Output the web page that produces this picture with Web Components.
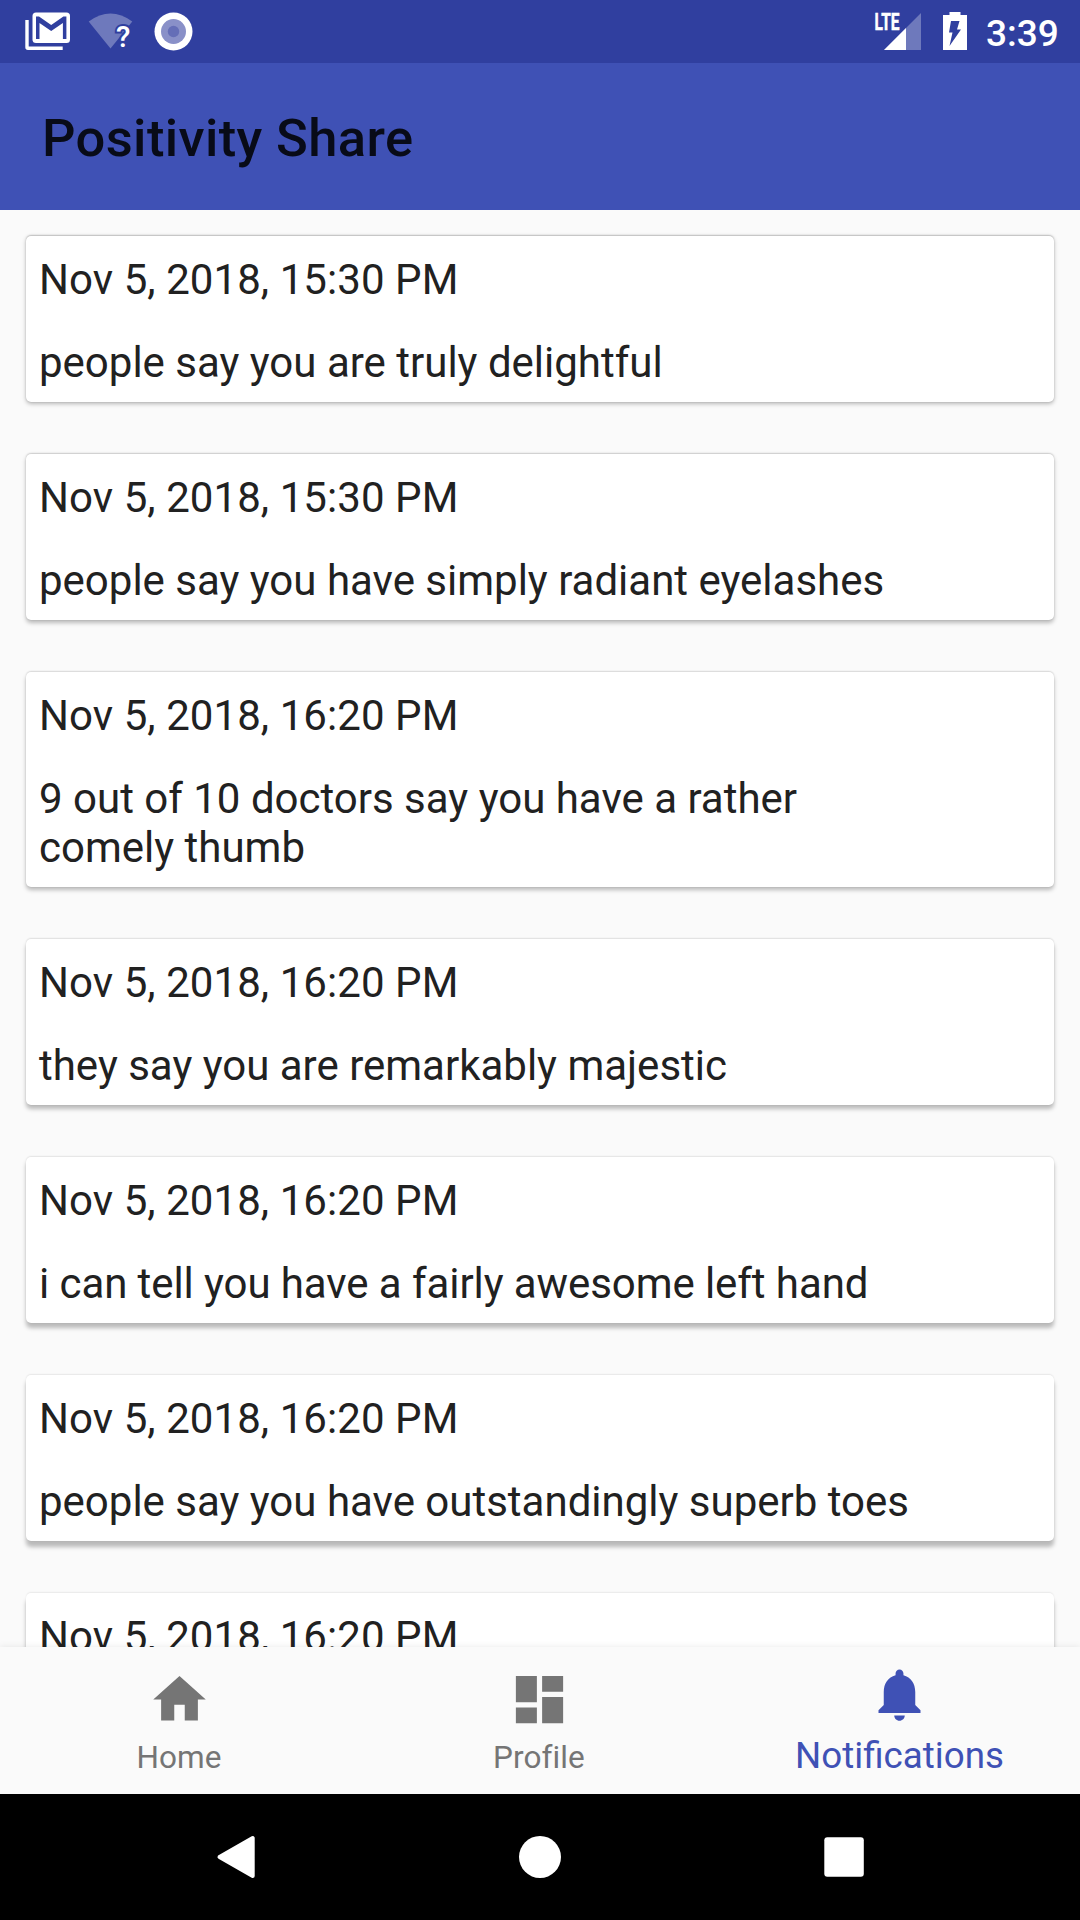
<!DOCTYPE html>
<html lang="en">
<head>
<meta charset="utf-8">
<title>Positivity Share</title>
<style>
html, body { margin: 0; padding: 0; }
body { font-family: Roboto, "Noto Sans", sans-serif; background: #fafafa; }
</style>
</head>
<body>
<positivity-app>
  <status-bar slot="status"></status-bar>
  <app-bar slot="header">Positivity Share</app-bar>
  <share-card style="--dy:1.6px;--amb:.19"><span slot="date">Nov 5, 2018, 15:30 PM</span>people say you are truly delightful</share-card>
  <share-card style="--dy:2.2px;--amb:.16"><span slot="date">Nov 5, 2018, 15:30 PM</span>people say you have simply radiant eyelashes</share-card>
  <share-card style="--dy:3px;--amb:.13"><span slot="date">Nov 5, 2018, 16:20 PM</span>9 out of 10 doctors say you have a rather<br>comely thumb</share-card>
  <share-card style="--dy:4px;--amb:.11"><span slot="date">Nov 5, 2018, 16:20 PM</span>they say you are remarkably majestic</share-card>
  <share-card style="--dy:4.6px;--amb:.09;--track:-.08px"><span slot="date">Nov 5, 2018, 16:20 PM</span>i can tell you have a fairly awesome left hand</share-card>
  <share-card style="--dy:5.3px;--amb:.08"><span slot="date">Nov 5, 2018, 16:20 PM</span>people say you have outstandingly superb toes</share-card>
  <share-card style="--dy:6px;--amb:.07"><span slot="date">Nov 5, 2018, 16:20 PM</span></share-card>
  <tab-bar slot="tabs">
    <tab-item icon="home">Home</tab-item>
    <tab-item icon="dashboard">Profile</tab-item>
    <tab-item icon="bell" active>Notifications</tab-item>
  </tab-bar>
  <system-nav slot="system"></system-nav>
</positivity-app>

<script>
const define = (name, html) => customElements.define(name, class extends HTMLElement {
  constructor() {
    super();
    this.attachShadow({ mode: "open" }).innerHTML = html;
  }
});

define("positivity-app", `
  <style>
    :host { display: flex; flex-direction: column; width: 1080px; height: 1920px; overflow: hidden; background: #fafafa; }
    main { flex: 1; min-height: 0; overflow: hidden; display: flex; flex-direction: column; gap: 52px; padding: 26px 26px 0; box-sizing: border-box; }
  </style>
  <slot name="status"></slot>
  <slot name="header"></slot>
  <main><slot></slot></main>
  <slot name="tabs"></slot>
  <slot name="system"></slot>`);

define("status-bar", `
  <style>
    :host { display: flex; justify-content: space-between; flex: none; height: 63px; background: #303f9f; color: #fff; }
    div { display: flex; }
    svg { display: block; }
    .time { font-size: 37px; line-height: 43px; font-weight: 500; padding-top: 12px; width: 94px; }
  </style>
  <div>
    <svg width="200" height="63" viewBox="0 0 200 63">
      <path d="M25.3 20h3.4v26.5h34V50H28q-2.700 0-2.700-2.700z" fill="#fff"/>
      <rect x="32.500" y="12.500" width="37.500" height="30.500" rx="3.500" fill="#fff"/>
      <path d="M36 39V16.500h3l12.200 8.500 12.200-8.500h3V39h-3.500V23l-11.700 8-11.700-8v16z" fill="#303f9f"/>
      <path d="M88.700 21.500Q110.500 5.500 132.300 21.500L110.500 48.500z" fill="#fff" opacity=".3"/>
      <text x="116" y="47" font-size="29.500" font-weight="500" fill="#fff" stroke="#303f9f" stroke-width="4" paint-order="stroke">?</text>
      <circle cx="173.500" cy="31.500" r="19" fill="#fff"/>
      <circle cx="173.500" cy="31.500" r="12.500" fill="#8990c8"/>
      <circle cx="173.500" cy="31.500" r="5.700" fill="#656eb7"/>
    </svg>
  </div>
  <div>
    <svg width="116" height="63" viewBox="870 0 116 63">
      <path d="M884 50L921 13V50z" fill="#fff" opacity=".3"/>
      <path d="M884 50L906 28V50z" fill="#fff"/>
      <text x="874.500" y="30" font-size="23" font-weight="700" textLength="25" lengthAdjust="spacingAndGlyphs" fill="#fff" stroke="#fff" stroke-width=".5">LTE</text>
      <path d="M943 15h6.500v-3h11v3h6.500v35h-24z" fill="#fff"/>
      <path d="M951 21h8.500l-2.500 8.500h4L949.500 46l3-13.500h-3.500z" fill="#303f9f"/>
    </svg>
    <span class="time">3:39</span>
  </div>`);

define("app-bar", `
  <style>
    :host { display: flex; align-items: center; flex: none; height: 147px; padding: 2px 0 0 42px; box-sizing: border-box; background: #3f51b5; color: #080b18; font-size: 52.5px; font-weight: 500; line-height: 62px; letter-spacing: .38px; }
  </style>
  <span><slot></slot></span>`);

define("share-card", `
  <style>
    :host { display: flex; flex-direction: column; flex: none; gap: 34px; padding: 19px 13px 15px; box-sizing: border-box; background: #fff; border-radius: 5px; color: #212121; font-size: 42px; line-height: 49px;
      box-shadow: 0 -.5px 1.5px rgba(0,0,0,var(--amb)), 0 var(--dy) 4px rgba(0,0,0,.26); }
    .date { letter-spacing: .07px; }
    .text { letter-spacing: var(--track, 0); }
  </style>
  <div class="date"><slot name="date"></slot></div>
  <div class="text"><slot></slot></div>`);

define("tab-bar", `
  <style>
    :host { display: flex; flex: none; height: 147px; background: #fafafa; box-shadow: 0 0 7px rgba(0,0,0,.09); position: relative; }
  </style>
  <slot></slot>`);

const ICONS = {
  home: "M10 20v-6h4v6h5v-8h3L12 3 2 12h3v8z",
  dashboard: "M3 13h8V3H3v10zm0 8h8v-6H3v6zm10 0h8V11h-8v10zm0-18v6h8V3h-8z",
  bell: "M12 22c1.100 0 2-.9 2-2h-4c0 1.100.89 2 2 2zm6-6v-5c0-3.070-1.640-5.640-4.500-6.320V4c0-.83-.67-1.500-1.500-1.500s-1.500.67-1.500 1.500v.68C7.630 5.360 6 7.920 6 11v5l-2 2v1h16v-1l-2-2z"
};
customElements.define("tab-item", class extends HTMLElement {
  connectedCallback() {
    this.attachShadow({ mode: "open" }).innerHTML = `
      <style>
        :host { display: flex; flex: 0 0 360px; box-sizing: border-box; flex-direction: column; align-items: center; justify-content: space-between; padding: 21px 1px 18px 0; color: #757575; font-size: 31.500px; line-height: 37px; letter-spacing: .1px; }
        :host([active]) { padding: 16px 1px 17px 0; color: #3f51b5; font-size: 36.750px; line-height: 43px; letter-spacing: 0; }
        svg { display: block; width: 63px; height: 63px; fill: currentColor; }
        span { margin-right: 1px; }
        :host([active]) span { margin-right: 0; }
      </style>
      <svg viewBox="0 0 24 24"><path d="${ICONS[this.getAttribute("icon")]}"/></svg>
      <span><slot></slot></span>`;
  }
});

define("system-nav", `
  <style>
    :host { display: flex; align-items: center; justify-content: center; flex: none; height: 126px; background: #000; }
    svg { display: block; }
  </style>
  <svg width="1080" height="126" viewBox="0 1794 1080 126" fill="#fff">
    <path d="M219.500 1857L252.700 1838V1876z" stroke="#fff" stroke-width="4" stroke-linejoin="round"/>
    <circle cx="540" cy="1857" r="21"/>
    <rect x="824.300" y="1837.300" width="39.500" height="39.500" rx="3"/>
  </svg>`);
</script>
</body>
</html>
